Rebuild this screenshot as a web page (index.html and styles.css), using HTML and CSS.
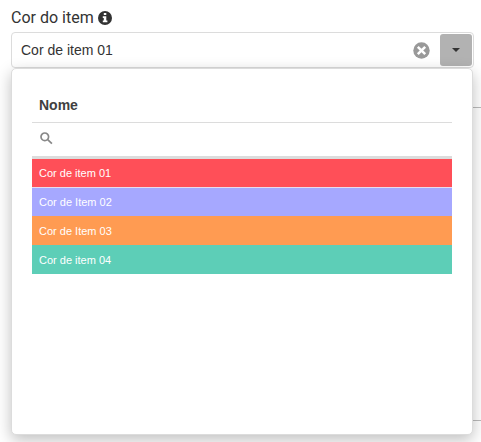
FILE: index.html
```html
<!DOCTYPE html>
<html lang="pt-BR">
<head>
<meta charset="utf-8">
<title>Cor do item</title>
<link rel="stylesheet" href="styles.css">
</head>
<body>
<main class="form">
  <div class="label"><span>Cor do item</span>
    <svg class="info" viewBox="0 0 14 14"><circle cx="7" cy="7" r="7"/><path d="M5.8 2h2.5v2H5.8zM4.8 5.3h3.5v4.3h1.1v1.6H4.8V9.6h1V6.9h-1z"/></svg>
  </div>
  <div class="field">
    <span class="value">Cor de item 01</span>
    <svg class="clear" viewBox="0 0 17 17"><circle cx="8.5" cy="8.5" r="8.2"/><path d="M4.8 4.8l7.4 7.4M12.2 4.8l-7.4 7.4"/></svg>
    <button class="toggle" aria-label="Abrir"><span class="caret"></span></button>
  </div>
  <section class="popup">
    <div class="head">Nome</div>
    <div class="filter">
      <svg class="search" viewBox="0 0 13 13"><circle cx="4.8" cy="4.8" r="3.8"/><path d="M7.7 7.7l4.2 4"/></svg>
    </div>
    <div class="row red">Cor de item 01</div>
    <div class="row violet">Cor de Item 02</div>
    <div class="row orange">Cor de Item 03</div>
    <div class="row green">Cor de item 04</div>
  </section>
  <div class="backdrop-panel"></div>
</main>
</body>
</html>
```
FILE: styles.css
```css
* { box-sizing: border-box; }
body {
  margin: 0;
  height: 442px;
  overflow: hidden;
  background: #fff;
  color: #333;
  font-family: "Liberation Sans", Arial, sans-serif;
}
.form { position: relative; height: 442px; padding: 8px 8px 0 11px; }
.label {
  display: flex;
  align-items: center;
  gap: 4px;
  height: 20px;
  margin-bottom: 4px;
  font: 16px/20px Roboto, sans-serif;
}
.info { width: 14px; height: 14px; margin-top: -1px; fill: #333; }
.info path { fill: #fff; }
.field {
  display: flex;
  align-items: center;
  width: 463px;
  height: 36px;
  padding: 0 1px 0 9px;
  border: 1px solid #dcdcdc;
  border-radius: 4px;
  background: #fff;
}
.value { flex: 1; font-size: 14px; line-height: 16px; }
.clear { width: 17px; height: 17px; margin-right: 10px; fill: #999; }
.clear path { stroke: #fff; stroke-width: 2.5; }
.toggle {
  display: flex;
  align-items: center;
  justify-content: center;
  width: 32px;
  height: 32px;
  padding: 0;
  border: 0;
  border-radius: 3px;
  background: #b2b2b2;
}
.caret {
  border: 4px solid transparent;
  border-top-color: #333;
  border-bottom: 0;
}
.popup {
  position: relative;
  z-index: 1;
  width: 462px;
  height: 367px;
  padding: 19px 20px 0;
  border: 1px solid #dcdcdc;
  border-radius: 5px;
  background: #fff;
  box-shadow: 0 5px 15px rgba(0, 0, 0, .25);
}
.head {
  height: 35px;
  padding: 9px 7px 0;
  border-bottom: 1px solid #dcdcdc;
  color: #404040;
  font-size: 14px;
  font-weight: bold;
  line-height: 16px;
}
.filter {
  height: 36px;
  padding: 9px 8px 0;
  border-bottom: 3px solid #dcdcdc;
}
.search { display: block; width: 13px; height: 13px; fill: none; stroke: #888; stroke-width: 1.7; }
.row {
  height: 29px;
  padding-left: 7px;
  color: #fff;
  font-size: 11px;
  line-height: 28px;
}
.red { border-bottom: 1px solid #e8dcee; background: #ff4f58; }
.violet { height: 28px; background: #a6a8ff; }
.orange { background: #ff9b52; line-height: 30px; }
.green { background: #5dceb7; line-height: 30px; }
.backdrop-panel {
  position: absolute;
  left: 460px;
  top: 107px;
  width: 21px;
  height: 314px;
  border: solid #bbb;
  border-width: 1px 0;
}
```
